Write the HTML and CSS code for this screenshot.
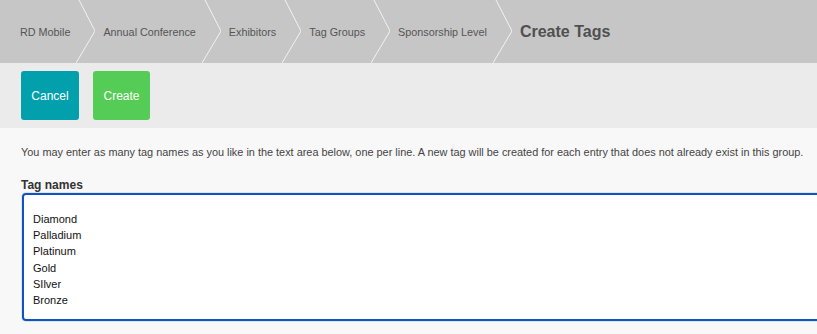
FILE: index.html
```html
<!DOCTYPE html>
<html>
  <head>
    <title>Create Tags</title>
    <meta name="viewport" content="width=device-width">
<link rel="stylesheet" href="styles.css">
</head>
<body>

<div class="crumbs">
  <span class="crumb">RD Mobile</span>
  <svg class="chev" width="19" height="63" viewBox="0 0 19 63"><polyline points="3,0 19,31 0,63"/></svg>
  <span class="crumb">Annual Conference</span>
  <svg class="chev" width="19" height="63" viewBox="0 0 19 63"><polyline points="3,0 19,31 0,63"/></svg>
  <span class="crumb">Exhibitors</span>
  <svg class="chev" width="19" height="63" viewBox="0 0 19 63"><polyline points="3,0 19,31 0,63"/></svg>
  <span class="crumb">Tag Groups</span>
  <svg class="chev" width="19" height="63" viewBox="0 0 19 63"><polyline points="3,0 19,31 0,63"/></svg>
  <span class="crumb">Sponsorship Level</span>
  <svg class="chev" width="19" height="63" viewBox="0 0 19 63"><polyline points="3,0 19,31 0,63"/></svg>
  <span class="crumb current">Create Tags</span>
</div>

<div class="toolbar">
  <button class="btn cancel">Cancel</button>
  <button class="btn create">Create</button>
</div>

<div class="main">
  <p class="hint">You may enter as many tag names as you like in the text area below, one per line. A new tag will be created for each entry that does not already exist in this group.</p>
  <label class="lbl" for="names">Tag names</label>
  <textarea id="names" class="names">Diamond
Palladium
Platinum
Gold
SIlver
Bronze</textarea>
</div>

</body>
</html>
```

FILE: styles.css
```css
* {box-sizing: border-box}
html, body {
  margin: 0; padding: 0;
}
body {
  overflow: hidden;
  font-family: "Liberation Sans", Arial, sans-serif;
  background: #f8f8f8;
  height: 334px;
}

.crumbs {
  display: flex;
  align-items: center;
  height: 63px;
  background: #c6c6c6;
  padding-left: 20px;
}
.crumb {
  font-size: 10.8px;
  color: #555;
  white-space: nowrap;
}
.crumb.current {
  font-size: 16px;
  font-weight: bold;
  color: #505050;
}
.chev {
  flex: none;
  display: block;
  margin: 0 8px 0 6px;
}
.chev polyline {
  fill: none;
  stroke: #f2f2f2;
  stroke-width: 1;
}

.toolbar {
  display: flex;
  gap: 14px;
  height: 65px;
  background: #ebebeb;
  padding: 8px 0 0 21px;
}
.btn {
  height: 49px;
  border: none;
  border-radius: 3px;
  color: white;
  font-family: "Liberation Sans", Arial, sans-serif;
  font-size: 12px;
  padding: 0;
}
.cancel {
  width: 58px;
  background: #01a0ac;
}
.create {
  width: 57px;
  background: #55cc55;
}

.main {
  padding: 18px 0 0 21px;
}
.hint {
  margin: 0;
  font-size: 10.9px;
  line-height: 13px;
  color: #444;
  white-space: nowrap;
}
.lbl {
  display: block;
  margin-top: 19px;
  font-size: 12px;
  font-weight: bold;
  color: #333;
  line-height: 14px;
}
.names {
  display: block;
  margin: 1px 0 0 1px;
  width: 820px;
  height: 128px;
  border: 2px solid #0f52c0;
  border-radius: 4px;
  box-shadow: 0 0 0 1px #dbe5ef;
  outline: none;
  resize: none;
  background: white;
  padding: 16px 9px 8px;
  font-family: "Liberation Sans", Arial, sans-serif;
  font-size: 11px;
  line-height: 16.2px;
  color: #111;
  overflow: hidden;
}
```
